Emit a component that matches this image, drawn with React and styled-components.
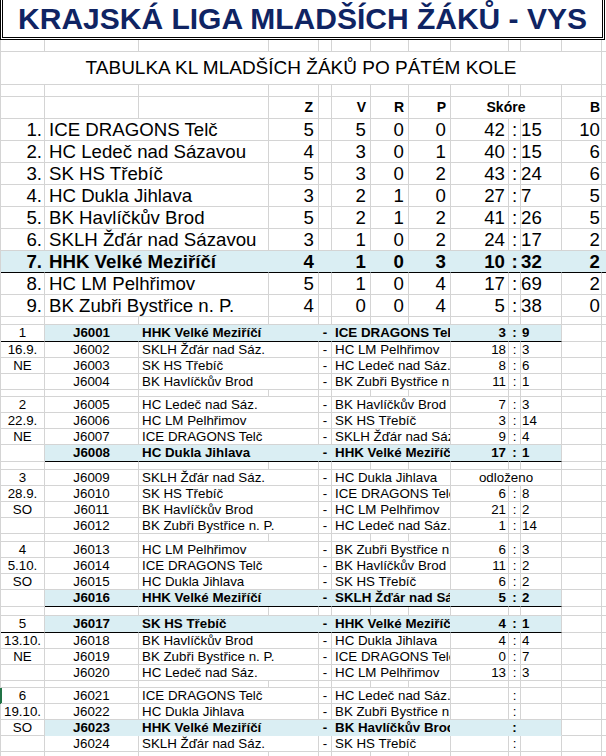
import React from 'react';
import styled, { createGlobalStyle } from 'styled-components';

const GRID = '#d4d4d4';
const FILL = '#daeef3';
const FONT = '"Liberation Sans", Arial, Helvetica, sans-serif';
const COLS = '44px 94px 130px 50px 13px 39px 38px 42px 58px 12px 41px 40px 1fr';

const Global = createGlobalStyle`
  html, body { margin: 0; padding: 0; background: #fff; }
  body { font-family: ${FONT}; color: #000; }
  *, *::before, *::after { box-sizing: border-box; }
`;

const Sheet = styled.div`
  width: 606px;
  height: 756px;
  overflow: hidden;
  background: #fff;
  font-family: ${FONT};
  color: #000;
`;

const TitleBox = styled.div`
  width: 605px;
  height: 40px;
  border: 3px double #000;
  border-top: none;
  color: #0f2463;
  font-size: 30px;
  font-weight: 700;
  line-height: 37px;
  text-align: center;
  white-space: nowrap;
`;

const Row = styled.div`
  display: grid;
  grid-template-columns: ${COLS};
  height: ${p => p.$h}px;
  line-height: ${p => p.$h - 1}px;
  font-size: ${p => p.$fs || 13.33}px;
  border-left: 1px solid ${p => (p.$mark ? '#217346' : GRID)};
  box-shadow: ${p => (p.$mark ? 'inset 1px 0 0 #217346' : 'none')};
`;

const Cell = styled.div`
  grid-column: span ${p => p.$span || 1};
  min-width: 0;
  overflow: hidden;
  white-space: nowrap;
  text-align: ${p => p.$align || 'left'};
  padding: 0 ${p => (p.$pr ?? 3)}px 0 ${p => (p.$pl ?? 3)}px;
  font-weight: ${p => (p.$bold ? 700 : 400)};
  background: ${p => (p.$fill ? FILL : 'transparent')};
  border-right: 1px solid ${p => (p.$fill && !p.$edge ? FILL : GRID)};
  border-bottom: 1px solid ${p => (p.$rule ? '#000' : p.$fill ? FILL : GRID)};
`;

const SubTitle = styled(Cell)`
  font-size: 19px;
  text-align: center;
  padding: 0;
`;

const standings = [
  ['ICE DRAGONS Telč', 5, 5, 0, 0, 42, 15, 10],
  ['HC Ledeč nad Sázavou', 4, 3, 0, 1, 40, 15, 6],
  ['SK HS Třebíč', 5, 3, 0, 2, 43, 24, 6],
  ['HC Dukla Jihlava', 3, 2, 1, 0, 27, 7, 5],
  ['BK Havlíčkův Brod', 5, 2, 1, 2, 41, 26, 5],
  ['SKLH Žďár nad Sázavou', 3, 1, 0, 2, 24, 17, 2],
  ['HHK Velké Meziříčí', 4, 1, 0, 3, 10, 32, 2],
  ['HC LM Pelhřimov', 5, 1, 0, 4, 17, 69, 2],
  ['BK Zubři Bystřice n. P.', 4, 0, 0, 4, 5, 38, 0],
];

// hl: highlighted/bold row; rule: 'full' | 'fromB' | undefined
const rounds = [
  {
    info: ['1', '16.9.', 'NE', ''],
    gap: 7,
    games: [
      { id: 'J6001', h: 'HHK Velké Meziříčí', a: 'ICE DRAGONS Telč', s: [3, 9], hl: true, rule: 'full' },
      { id: 'J6002', h: 'SKLH Žďár nad Sáz.', a: 'HC LM Pelhřimov', s: [18, 3] },
      { id: 'J6003', h: 'SK HS Třebíč', a: 'HC Ledeč nad Sáz.', s: [8, 6] },
      { id: 'J6004', h: 'BK Havlíčkův Brod', a: 'BK Zubři Bystřice n. P.', s: [11, 1] },
    ],
  },
  {
    info: ['2', '22.9.', 'NE', ''],
    gap: 8,
    games: [
      { id: 'J6005', h: 'HC Ledeč nad Sáz.', a: 'BK Havlíčkův Brod', s: [7, 3] },
      { id: 'J6006', h: 'HC LM Pelhřimov', a: 'SK HS Třebíč', s: [3, 14] },
      { id: 'J6007', h: 'ICE DRAGONS Telč', a: 'SKLH Žďár nad Sáz.', s: [9, 4] },
      { id: 'J6008', h: 'HC Dukla Jihlava', a: 'HHK Velké Meziříčí', s: [17, 1], hl: true, rule: 'fromB' },
    ],
  },
  {
    info: ['3', '28.9.', 'SO', ''],
    gap: 8,
    games: [
      { id: 'J6009', h: 'SKLH Žďár nad Sáz.', a: 'HC Dukla Jihlava', note: 'odloženo' },
      { id: 'J6010', h: 'SK HS Třebíč', a: 'ICE DRAGONS Telč', s: [6, 8] },
      { id: 'J6011', h: 'BK Havlíčkův Brod', a: 'HC LM Pelhřimov', s: [21, 2] },
      { id: 'J6012', h: 'BK Zubři Bystřice n. P.', a: 'HC Ledeč nad Sáz.', s: [1, 14] },
    ],
  },
  {
    info: ['4', '5.10.', 'SO', ''],
    gap: 9,
    games: [
      { id: 'J6013', h: 'HC LM Pelhřimov', a: 'BK Zubři Bystřice n. P.', s: [6, 3] },
      { id: 'J6014', h: 'ICE DRAGONS Telč', a: 'BK Havlíčkův Brod', s: [11, 2] },
      { id: 'J6015', h: 'HC Dukla Jihlava', a: 'SK HS Třebíč', s: [6, 2] },
      { id: 'J6016', h: 'HHK Velké Meziříčí', a: 'SKLH Žďár nad Sáz.', s: [5, 2], hl: true, rule: 'fromB' },
    ],
  },
  {
    info: ['5', '13.10.', 'NE', ''],
    gap: 7,
    games: [
      { id: 'J6017', h: 'SK HS Třebíč', a: 'HHK Velké Meziříčí', s: [4, 1], hl: true, rule: 'full' },
      { id: 'J6018', h: 'BK Havlíčkův Brod', a: 'HC Dukla Jihlava', s: [4, 4] },
      { id: 'J6019', h: 'BK Zubři Bystřice n. P.', a: 'ICE DRAGONS Telč', s: [0, 7] },
      { id: 'J6020', h: 'HC Ledeč nad Sáz.', a: 'HC LM Pelhřimov', s: [13, 3] },
    ],
  },
  {
    info: ['6', '19.10.', 'SO', ''],
    gap: 8,
    games: [
      { id: 'J6021', h: 'ICE DRAGONS Telč', a: 'HC Ledeč nad Sáz.', s: ['', ''], mark: true },
      { id: 'J6022', h: 'HC Dukla Jihlava', a: 'BK Zubři Bystřice n. P.', s: ['', ''] },
      { id: 'J6023', h: 'HHK Velké Meziříčí', a: 'BK Havlíčkův Brod', s: ['', ''], hl: true },
      { id: 'J6024', h: 'SKLH Žďár nad Sáz.', a: 'SK HS Třebíč', s: ['', ''] },
    ],
  },
];

function EmptyRow({ h }) {
  return (
    <Row $h={h}>
      {Array.from({ length: 13 }, (_, i) => (
        <Cell key={i} />
      ))}
    </Row>
  );
}

function HeaderRow() {
  return (
    <Row $h={22} $fs={14}>
      <Cell />
      <Cell />
      <Cell />
      <Cell $align="right" $bold $pr={5}>Z</Cell>
      <Cell />
      <Cell $align="right" $bold $pr={4}>V</Cell>
      <Cell $align="right" $bold $pr={4}>R</Cell>
      <Cell $align="right" $bold $pr={4}>P</Cell>
      <Cell $span={3} $align="center" $bold>Skóre</Cell>
      <Cell $align="right" $bold $pr={1}>B</Cell>
      <Cell />
    </Row>
  );
}

function StandRow({ pos, t }) {
  const [team, z, v, r, p, sf, sa, b] = t;
  const hl = pos === 7;
  const c = { $fill: hl, $bold: hl, $rule: hl };
  return (
    <Row $h={22} $fs={18.67}>
      <Cell {...c} $align="right" $pr={2}>{pos}.</Cell>
      <Cell {...c} $span={2} $pl={4}>{team}</Cell>
      <Cell {...c} $align="right" $pr={4}>{z}</Cell>
      <Cell {...c} />
      <Cell {...c} $align="right" $pr={4}>{v}</Cell>
      <Cell {...c} $align="right" $pr={4}>{r}</Cell>
      <Cell {...c} $align="right" $pr={4}>{p}</Cell>
      <Cell {...c} $align="right" $pr={3}>{sf}</Cell>
      <Cell {...c} $align="center" $pl={0} $pr={0}>:</Cell>
      <Cell {...c} $pl={0}>{sa}</Cell>
      <Cell {...c} $align="right" $pr={1}>{b}</Cell>
      <Cell {...c} />
    </Row>
  );
}

function MatchRow({ g, info }) {
  const hl = !!g.hl;
  const ruleA = g.rule === 'full';
  const ruleB = !!g.rule;
  const c = { $fill: hl, $bold: hl, $rule: ruleB };
  const h = ruleB ? 17 : 16;
  return (
    <Row $h={h} $fs={13.33} $mark={g.mark}>
      <Cell $align="center" $pl={0} $pr={0} $rule={ruleA}>{info}</Cell>
      <Cell {...c} $align="center">{g.id}</Cell>
      <Cell {...c} $span={2} $pl={3}>{g.h}</Cell>
      <Cell {...c} $align="center" $pl={0} $pr={0}>-</Cell>
      <Cell {...c} $span={3} $pl={3} $pr={0}>{g.a}</Cell>
      {g.note ? (
        <Cell {...c} $span={3} $align="center" $pl={0} $pr={0} $edge>{g.note}</Cell>
      ) : (
        <>
          <Cell {...c} $align="right" $pr={2}>{g.s[0]}</Cell>
          <Cell {...c} $align="center" $pl={0} $pr={0}>:</Cell>
          <Cell {...c} $pl={1} $edge>{g.s[1]}</Cell>
        </>
      )}
      <Cell />
      <Cell />
    </Row>
  );
}

export default function App() {
  return (
    <>
      <Global />
      <Sheet>
        <TitleBox>KRAJSKÁ LIGA MLADŠÍCH ŽÁKŮ - VYS</TitleBox>
        <EmptyRow h={12} />
        <Row $h={33}>
          <SubTitle $span={12}>TABULKA KL MLADŠÍCH ŽÁKŮ PO PÁTÉM KOLE</SubTitle>
          <Cell />
        </Row>
        <EmptyRow h={12} />
        <HeaderRow />
        {standings.map((t, i) => (
          <StandRow key={i} pos={i + 1} t={t} />
        ))}
        <EmptyRow h={8} />
        {rounds.map((r, ri) => (
          <React.Fragment key={ri}>
            {r.games.map((g, gi) => (
              <MatchRow key={g.id} g={g} info={r.info[gi]} />
            ))}
            <EmptyRow h={r.gap} />
          </React.Fragment>
        ))}
      </Sheet>
    </>
  );
}
